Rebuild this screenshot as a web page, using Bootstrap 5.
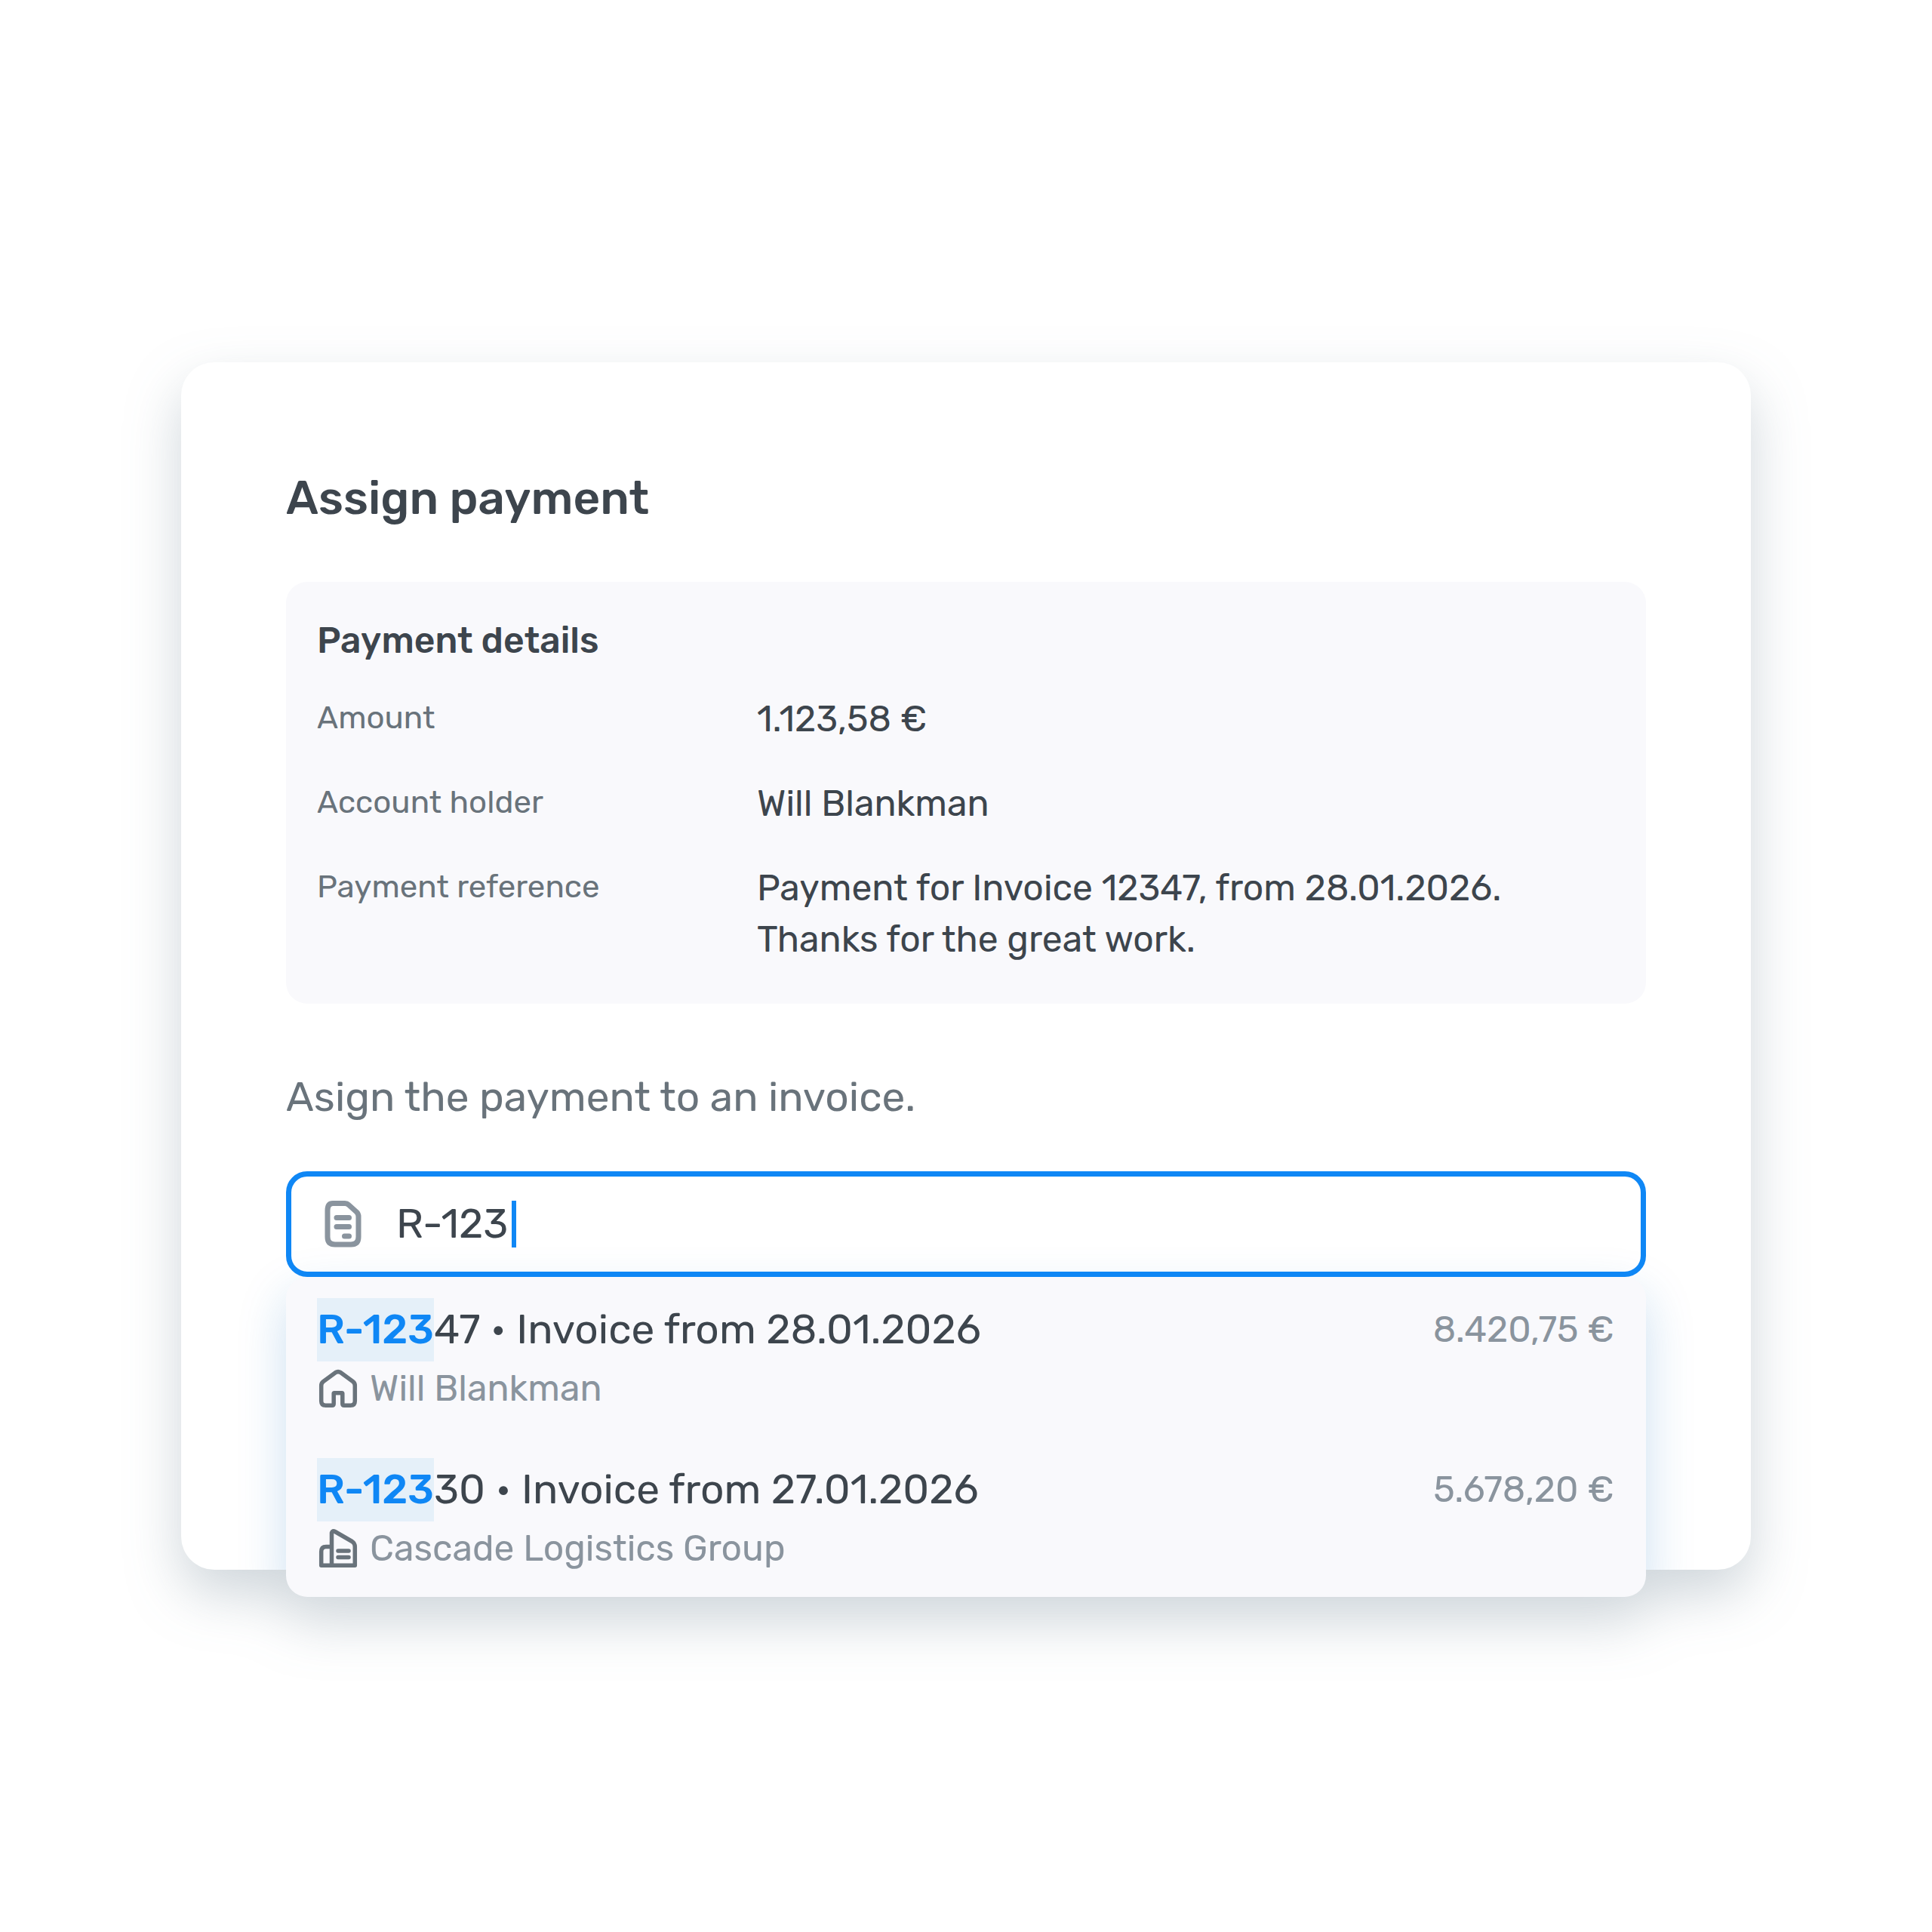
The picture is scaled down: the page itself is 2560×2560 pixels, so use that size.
<!DOCTYPE html>
<html lang="en">
<head>
<meta charset="utf-8">
<meta name="viewport" content="width=device-width, initial-scale=1">
<title>Assign payment</title>
<link href="https://cdn.jsdelivr.net/npm/bootstrap@5.3.0/dist/css/bootstrap.min.css" rel="stylesheet">
<style>
  :root { --ink: #3d454d; --label: #69737b; --soft: #8a949e; --accent: #0f87f5; --panel: #f9f9fc; --hit: #e5f0f9; }
  body { font-family: Rubik, Roboto, "Open Sans", sans-serif; color: var(--ink); background: #fff; }
  .page { padding: 0 240px; }
  .dialog { border: 0; border-radius: 44px; padding: 140px 139px 388px; color: var(--ink); filter: drop-shadow(0 32px 36px rgba(70, 95, 115, .26)); }
  .dialog-title { font-size: 62px; line-height: 80px; font-weight: 500; margin-bottom: 71px; }
  .details { background: var(--panel); border-radius: 28px; padding: 44px 41px 51px; }
  .details-title { font-size: 48px; line-height: 68px; font-weight: 500; margin-bottom: 36px; }
  .details-list { display: grid; grid-template-columns: 583px 1fr; row-gap: 44px; }
  .details-list dt { font-size: 42px; line-height: 64px; font-weight: 400; color: var(--label); }
  .details-list dd { font-size: 48px; line-height: 68px; }
  .prompt { font-size: 55px; line-height: 80px; color: var(--label); margin: 84px 0 58px; }
  .search { height: 140px; border: 7px solid var(--accent); border-radius: 28px; padding: 0 40px; gap: 41px; position: relative; z-index: 2; }
  .search .form-control { font-size: 55px; line-height: 80px; color: var(--ink); padding: 0; border: 0; background: none; box-shadow: none; }
  .caret { position: absolute; left: 292px; top: 50%; width: 6px; height: 62px; margin-top: -31px; background: var(--accent); }
  .results { position: absolute; left: 0; right: 0; top: 100%; z-index: 1; background: var(--panel); border-radius: 28px; padding: 28px 0; gap: 56px; }
  /* tinted glow, cut off where the dialog ends */
  .results::before { content: ""; position: absolute; inset: 0; z-index: -1; border-radius: 28px; box-shadow: 0 24px 64px rgba(20, 110, 190, .21); clip-path: inset(-120px -120px 36px -120px); }
  .results .list-group-item { border: 0; padding: 0 42px 0 41px; background: none; color: var(--ink); }
  .invoice { font-size: 55px; line-height: 84px; }
  .hit { display: inline-block; background: var(--hit); color: var(--accent); font-weight: 500; }
  .customer, .amount { font-size: 48px; line-height: 72px; color: var(--soft); }
  .customer { gap: 14px; }
  .amount { line-height: 84px; }
  .customer svg { color: var(--label); }
</style>
</head>
<body>
<main class="page min-vh-100 d-flex align-items-center">
  <section class="dialog card w-100">
    <h1 class="dialog-title">Assign payment</h1>

    <div class="details">
      <h2 class="details-title">Payment details</h2>
      <dl class="details-list mb-0">
        <dt>Amount</dt>
        <dd class="mb-0">1.123,58 €</dd>
        <dt>Account holder</dt>
        <dd class="mb-0">Will Blankman</dd>
        <dt>Payment reference</dt>
        <dd class="mb-0">Payment for Invoice 12347, from 28.01.2026.<br>Thanks for the great work.</dd>
      </dl>
    </div>

    <label class="prompt" for="invoice-search">Asign the payment to an invoice.</label>

    <div class="position-relative">
      <div class="search d-flex align-items-center">
        <svg class="flex-shrink-0" width="58" height="64" viewBox="0 0 58 64" fill="none" stroke="#8a949e" stroke-width="7" stroke-linecap="round" stroke-linejoin="round" aria-hidden="true">
          <path d="M15 4.500H31Q34 4.500 36 6.500L46.500 16Q49 18.500 49 22V49Q49 59 39 59H18Q8 59 8 49V14Q8 4.500 15 4.500Z"/>
          <path d="M20 23.500H36.500M20 35.500H36.500M30.500 48H36.500"/>
        </svg>
        <input class="form-control" id="invoice-search" type="text" value="R-123" autocomplete="off">
        <span class="caret"></span>
      </div>

      <div class="results list-group">
        <button type="button" class="list-group-item list-group-item-action">
          <span class="d-flex justify-content-between">
            <span class="invoice"><span class="hit">R-123</span>47 • Invoice from 28.01.2026</span>
            <span class="amount">8.420,75 €</span>
          </span>
          <span class="customer d-flex align-items-center">
            <svg width="56" height="56" viewBox="0 0 56 56" fill="none" stroke="currentColor" stroke-width="5.500" stroke-linejoin="round" aria-hidden="true">
              <path d="M5.700 24Q5.700 20.500 8.500 18.500L24.500 6.700Q28 4.500 31.500 6.700L47.500 18.500Q50.300 20.500 50.300 24V44.500Q50.300 50.300 44.500 50.300H36Q33.800 50.300 33.800 48V34.500Q33.800 33.700 33 33.700H23Q22.200 33.700 22.200 34.500V48Q22.200 50.300 20 50.300H11.500Q5.700 50.300 5.700 44.500Z"/>
            </svg>
            Will Blankman
          </span>
        </button>
        <button type="button" class="list-group-item list-group-item-action">
          <span class="d-flex justify-content-between">
            <span class="invoice"><span class="hit">R-123</span>30 • Invoice from 27.01.2026</span>
            <span class="amount">5.678,20 €</span>
          </span>
          <span class="customer d-flex align-items-center">
            <svg width="56" height="56" viewBox="0 0 56 56" fill="none" stroke="currentColor" stroke-width="5.500" stroke-linecap="round" stroke-linejoin="round" aria-hidden="true">
              <path d="M19.500 50.300V7Q20.500 3.500 24 5.500L46.500 18.500Q50.300 21 50.300 25.500V50.300H5.700V32Q5.700 25.500 12 25.500H19.500V50.300"/>
              <path d="M28 31H42M28 39.500H42"/>
            </svg>
            Cascade Logistics Group
          </span>
        </button>
      </div>
    </div>
  </section>
</main>
<script src="https://cdn.jsdelivr.net/npm/bootstrap@5.3.0/dist/js/bootstrap.bundle.min.js"></script>
</body>
</html>
